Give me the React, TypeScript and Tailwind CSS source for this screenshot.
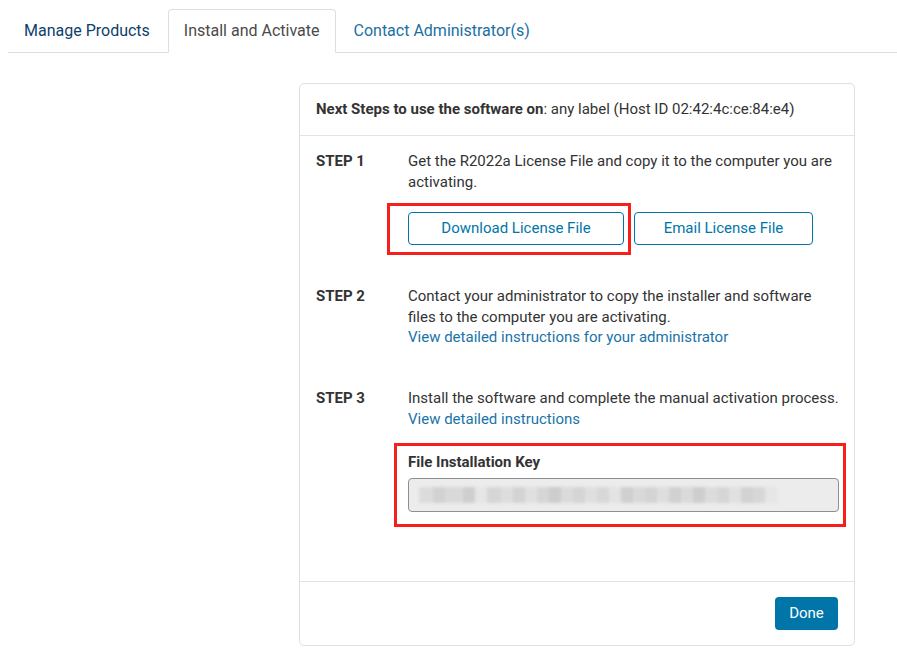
import React from "react";

const blurBlocks = [
  { w: 14, c: "#dcdcdc" }, { w: 12, c: "#d2d2d2" }, { w: 18, c: "#d9d9d9" }, { w: 12, c: "#cfcfcf" },
  { w: 12, c: "#e6e6e6" }, { w: 14, c: "#d6d6d6" }, { w: 12, c: "#dddddd" }, { w: 12, c: "#d3d3d3" },
  { w: 12, c: "#e0e0e0" }, { w: 12, c: "#d6d6d6" }, { w: 12, c: "#cdcdcd" }, { w: 12, c: "#dbdbdb" },
  { w: 12, c: "#d5d5d5" }, { w: 12, c: "#dfdfdf" }, { w: 12, c: "#d8d8d8" }, { w: 12, c: "#e3e3e3" },
  { w: 12, c: "#d0d0d0" }, { w: 12, c: "#d9d9d9" }, { w: 12, c: "#d4d4d4" }, { w: 12, c: "#dedede" },
  { w: 12, c: "#d1d1d1" }, { w: 12, c: "#dadada" }, { w: 12, c: "#cecece" }, { w: 12, c: "#dcdcdc" },
  { w: 12, c: "#d6d6d6" }, { w: 12, c: "#e1e1e1" }, { w: 12, c: "#d2d2d2" }, { w: 12, c: "#d7d7d7" },
  { w: 12, c: "#e6e6e6" },
];

export default function App() {
  return (
    <div
      className="min-h-[672px] bg-white pl-2 pt-[9px] text-[15px] text-[#333333]"
      style={{ fontFamily: "Roboto, 'Liberation Sans', sans-serif" }}
    >
      {/* Tabs */}
      <div className="flex border-b border-[#dedede] text-[16px]">
        <div className="mb-[-1px] flex h-[44px] items-center px-4 text-[#0e3f6c]">Manage Products</div>
        <div className="mb-[-1px] ml-[2px] flex h-[44px] items-center rounded-t-[4px] border border-[#dedede] border-b-white bg-white px-[15px] text-[#4a4a4a]">
          Install and Activate
        </div>
        <div className="mb-[-1px] ml-[2px] flex h-[44px] items-center px-4 text-[#1a6fa3]">
          Contact Administrator(s)
        </div>
      </div>

      {/* Card */}
      <div className="ml-[291px] mt-[30px] w-[556px] rounded-[5px] border border-[#dfdfdf]">
        <div className="border-b border-[#e3e3e3] px-4 pb-[16px] pt-[15px] leading-[20px]">
          <span className="font-bold">Next Steps to use the software on</span>: any label (Host ID
          02:42:4c:ce:84:e4)
        </div>

        <div className="px-4 pb-[69px] pt-[15px] leading-[21px]">
          {/* Step 1 */}
          <div className="flex">
            <div className="w-[92px] shrink-0 font-bold">STEP 1</div>
            <div className="flex-1">
              <div>Get the R2022a License File and copy it to the computer you are activating.</div>
              <div className="mt-[19px] flex gap-[10px]">
                <div className="relative">
                  <button className="h-[33px] w-[216px] rounded-[4px] border border-[#0076a8] bg-white text-[15px] text-[#0076a8]">
                    Download License File
                  </button>
                  <div className="pointer-events-none absolute -bottom-[10px] -left-[21px] -right-[7px] -top-[9px] border-[3px] border-[#f5201c]" />
                </div>
                <button className="h-[33px] w-[179px] rounded-[4px] border border-[#0076a8] bg-white text-[15px] text-[#0076a8]">
                  Email License File
                </button>
              </div>
            </div>
          </div>

          {/* Step 2 */}
          <div className="mt-[41px] flex leading-[20.5px]">
            <div className="w-[92px] shrink-0 font-bold">STEP 2</div>
            <div className="flex-1">
              <div>Contact your administrator to copy the installer and software files to the computer you are activating.</div>
              <div className="text-[#1a73a8]">View detailed instructions for your administrator</div>
            </div>
          </div>

          {/* Step 3 */}
          <div className="mt-[40px] flex leading-[21px]">
            <div className="w-[92px] shrink-0 font-bold">STEP 3</div>
            <div className="flex-1">
              <div className="whitespace-nowrap">Install the software and complete the manual activation process.</div>
              <div className="text-[#1a73a8]">View detailed instructions</div>
              <div className="relative mt-[22px]">
                <div className="font-bold leading-[20px]">File Installation Key</div>
                <div className="mt-[6px] flex h-[34px] items-center overflow-hidden rounded-[4px] border border-[#8f8f8f] bg-[#ececec] px-[10px]">
                  <div className="flex h-[16px] blur-[1.5px]">
                    {blurBlocks.map((b, i) => (
                      <div key={i} style={{ width: b.w, background: b.c }} />
                    ))}
                  </div>
                </div>
                <div className="pointer-events-none absolute -bottom-[15px] -left-[14px] -right-[7px] -top-[9px] border-[3px] border-[#f5201c]" />
              </div>
            </div>
          </div>
        </div>

        <div className="flex justify-end border-t border-[#e3e3e3] px-4 pb-[15px] pt-[15px]">
          <button className="h-[33px] w-[63px] rounded-[4px] bg-[#0076a8] text-[15px] text-white">Done</button>
        </div>
      </div>
    </div>
  );
}
